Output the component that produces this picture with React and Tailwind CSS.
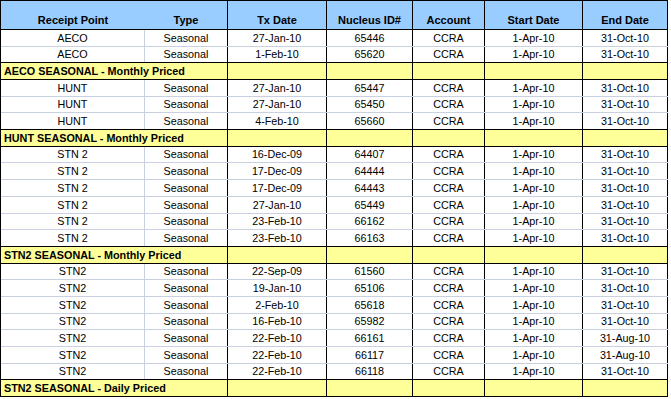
import React from "react";

// column widths include each cell's right border
const COLS = ["w-[144px]", "w-[83px]", "w-[99px]", "w-[86px]", "w-[72px]", "w-[98px]", "w-[85px]"];

const HEADERS = ["Receipt Point", "Type", "Tx Date", "Nucleus ID#", "Account", "Start Date", "End Date"];

const d = (point, tx, id, end = "31-Oct-10") => ({ point, tx, id, end });
const s = (label) => ({ section: label });

const ROWS = [
  d("AECO", "27-Jan-10", "65446"),
  d("AECO", "1-Feb-10", "65620"),
  s("AECO SEASONAL - Monthly Priced"),
  d("HUNT", "27-Jan-10", "65447"),
  d("HUNT", "27-Jan-10", "65450"),
  d("HUNT", "4-Feb-10", "65660"),
  s("HUNT SEASONAL - Monthly Priced"),
  d("STN 2", "16-Dec-09", "64407"),
  d("STN 2", "17-Dec-09", "64444"),
  d("STN 2", "17-Dec-09", "64443"),
  d("STN 2", "27-Jan-10", "65449"),
  d("STN 2", "23-Feb-10", "66162"),
  d("STN 2", "23-Feb-10", "66163"),
  s("STN2 SEASONAL - Monthly Priced"),
  d("STN2", "22-Sep-09", "61560"),
  d("STN2", "19-Jan-10", "65106"),
  d("STN2", "2-Feb-10", "65618"),
  d("STN2", "16-Feb-10", "65982"),
  d("STN2", "22-Feb-10", "66161", "31-Aug-10"),
  d("STN2", "22-Feb-10", "66117", "31-Aug-10"),
  d("STN2", "22-Feb-10", "66118"),
  s("STN2 SEASONAL - Daily Priced"),
];

// spread 367px over the 22 rows (mix of 17 and 16)
const rowHeight = (i) =>
  Math.round(((i + 1) * 367) / ROWS.length) - Math.round((i * 367) / ROWS.length);

function DataRow({ row, h, bottomBlack }) {
  const cells = [row.point, "Seasonal", row.tx, row.id, "CCRA", "1-Apr-10", row.end];
  return (
    <div
      className={`flex ${h === 17 ? "h-[17px]" : "h-[16px]"} border-b ${
        bottomBlack ? "border-black" : "border-[#c8d0e2]"
      }`}
    >
      {cells.map((c, i) => (
        <div
          key={i}
          className={`${COLS[i]} flex items-center justify-center border-r ${
            i === 0 ? "border-[#c8d0e2]" : "border-black"
          }`}
        >
          {c}
        </div>
      ))}
    </div>
  );
}

function SectionRow({ label, h }) {
  return (
    <div
      className={`flex ${h === 17 ? "h-[17px]" : "h-[16px]"} border-b border-black bg-[#ffff99] font-bold text-[10.8px]`}
    >
      <div className="w-[227px] flex items-center pl-[3px] border-r border-black whitespace-nowrap">
        {label}
      </div>
      {COLS.slice(2).map((w, i) => (
        <div key={i} className={`${w} border-r border-black`} />
      ))}
    </div>
  );
}

export default function App() {
  return (
    <div className="w-[671px] h-[399px] bg-white overflow-hidden">
      <div
        className="w-[668px] border-l border-black text-black text-[10.75px] leading-none"
        style={{ fontFamily: '"Liberation Sans", Arial, sans-serif' }}
      >
        {/* Header */}
        <div className="flex h-[30px] border-t border-b border-black bg-[#99ccff] font-bold text-[11px]">
          {HEADERS.map((t, i) => (
            <div
              key={t}
              className={`${COLS[i]} flex items-end justify-center pb-[3px] ${
                i === 0 ? "" : "border-r border-black"
              }`}
            >
              {t}
            </div>
          ))}
        </div>

        {ROWS.map((row, i) => {
          const h = rowHeight(i);
          if (row.section) return <SectionRow key={i} label={row.section} h={h} />;
          const next = ROWS[i + 1];
          return <DataRow key={i} row={row} h={h} bottomBlack={!next || !!next.section} />;
        })}
      </div>
    </div>
  );
}
